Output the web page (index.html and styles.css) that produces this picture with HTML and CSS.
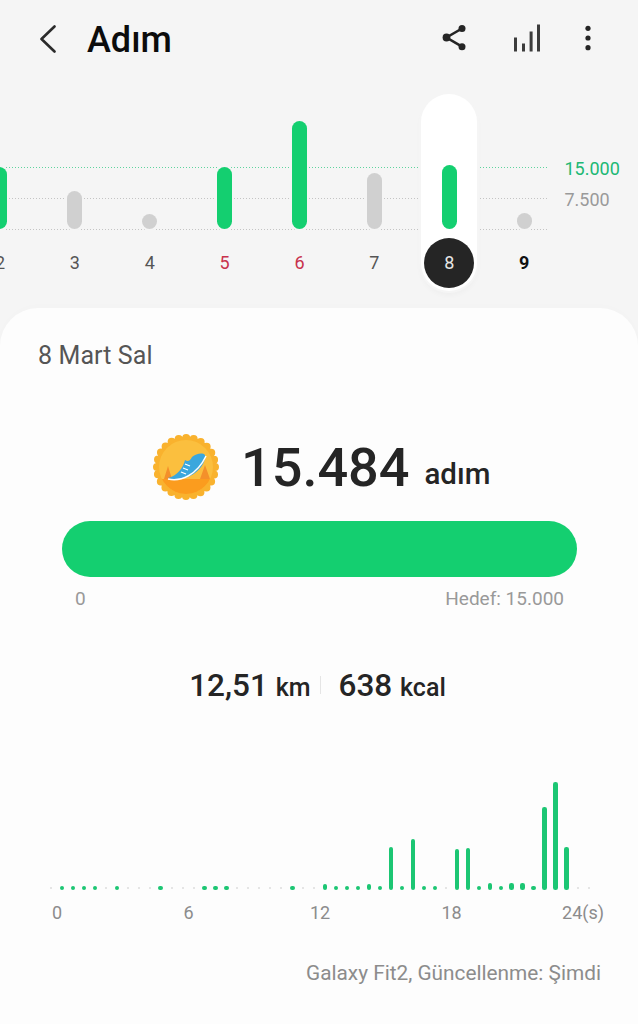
FILE: index.html
```html
<!DOCTYPE html>
<html lang="tr">
<head>
  <meta charset="utf-8">
  <title>Adım</title>
  <link rel="stylesheet" href="styles.css">
</head>
<body>

  <div class="topbar">
    <svg class="back" width="18" height="28" viewBox="0 0 18 28"><path d="M15.5 1.5 L2.5 14 L15.5 26.5" /></svg>
    <h1>Adım</h1>
    <div class="actions">
      <svg class="share" width="24" height="26" viewBox="0 0 24 26">
        <path d="M20 3.5 L4.5 12.5 L20 21.7" />
        <circle cx="20" cy="3.5" r="3.5" />
        <circle cx="4.5" cy="12.5" r="3.9" />
        <circle cx="20" cy="21.7" r="3.5" />
      </svg>
      <svg class="levels" width="26" height="28" viewBox="0 0 26 28">
        <rect x="0" y="13.5" width="3" height="14" />
        <rect x="8" y="19.5" width="3" height="8" />
        <rect x="15.6" y="7.5" width="3" height="20" />
        <rect x="23" y="0.5" width="3" height="27" />
      </svg>
      <svg class="more" width="6" height="26" viewBox="0 0 6 26">
        <circle cx="3" cy="3.3" r="2.6" />
        <circle cx="3" cy="13" r="2.6" />
        <circle cx="3" cy="22.7" r="2.6" />
      </svg>
    </div>
  </div>

  <div class="week">
    <div class="level level-goal"><i></i><span>15.000</span></div>
    <div class="level level-half"><i></i><span>7.500</span></div>
    <div class="level level-zero"><i></i></div>

    <div class="days">
      <div class="day"><div class="slot"><b class="bar green" style="height:62px"></b></div><span class="num">2</span></div>
      <div class="day"><div class="slot"><b class="bar gray" style="height:38px"></b></div><span class="num">3</span></div>
      <div class="day"><div class="slot"><b class="bar gray" style="height:15px"></b></div><span class="num">4</span></div>
      <div class="day"><div class="slot"><b class="bar green" style="height:62px"></b></div><span class="num red">5</span></div>
      <div class="day"><div class="slot"><b class="bar green" style="height:108px"></b></div><span class="num red">6</span></div>
      <div class="day"><div class="slot"><b class="bar gray" style="height:56px"></b></div><span class="num">7</span></div>
      <div class="day selected"><div class="slot"><b class="bar green" style="height:64px"></b></div><span class="num">8</span></div>
      <div class="day"><div class="slot"><b class="bar gray" style="height:16px"></b></div><span class="num today">9</span></div>
    </div>
  </div>

  <div class="card">
    <p class="date">8 Mart Sal</p>

    <div class="total">
      <svg class="badge" width="68" height="68" viewBox="0 0 68 68">
        <defs>
          <clipPath id="badgeClip"><circle cx="34" cy="34" r="27" /></clipPath>
        </defs>
        <circle cx="34" cy="34" r="29" fill="#f9b22e" />
        <circle cx="34" cy="34" r="29" fill="none" stroke="#f9b22e" stroke-width="8" stroke-linecap="round" stroke-dasharray="0 7.59" />
        <g clip-path="url(#badgeClip)">
          <rect x="0" y="0" width="68" height="68" fill="#fbbf3e" />
          <path d="M12 46 L16 33 L20 46 Z M48 46 L53 32 L58 46 Z" fill="#f4902a" />
          <rect x="0" y="46" width="68" height="22" fill="#fb9c1e" />
        </g>
        <path d="M16 45 C25 43 31 35 33 27 C36 29 38 28 40 24 C44 21 50 19 53 22 C54 29 47 39 38 43 C30 47 20 47 16 45 Z" fill="#3ba7dd" />
        <path d="M16 46 C29 49 45 42 54 23" fill="none" stroke="#fff" stroke-width="1.5" />
        <path d="M33 31 L38 33 M31 35 L36 37 M29 39 L34 41" stroke="#fff" stroke-width="1.3" />
      </svg>
      <span class="steps">15.484</span>
      <span class="steps-unit">adım</span>
    </div>

    <div class="progress"></div>
    <div class="progress-labels">
      <span>0</span>
      <span>Hedef: 15.000</span>
    </div>

    <div class="stats">
      <span class="stat">12,51 <small>km</small></span>
      <i class="sep"></i>
      <span class="stat">638 <small>kcal</small></span>
    </div>

    <div class="hours">
      <b class="tick"></b><b class="dot"></b><b class="dot"></b><b class="dot"></b><b class="dot"></b><b class="tick"></b><b class="dot"></b><b class="tick"></b><b class="tick"></b><b class="tick"></b>
      <b class="dot"></b><b class="tick"></b><b class="tick"></b><b class="tick"></b><b class="dot"></b><b class="dot"></b><b class="dot"></b><b class="tick"></b><b class="tick"></b><b class="tick"></b>
      <b class="tick"></b><b class="tick"></b><b class="dot"></b><b class="tick"></b><b class="tick"></b><b class="dot" style="height:6px"></b><b class="dot"></b><b class="dot"></b><b class="dot"></b><b class="dot" style="height:6px"></b>
      <b class="dot"></b><b class="dot" style="height:43px"></b><b class="dot"></b><b class="dot" style="height:51px"></b><b class="dot"></b><b class="dot"></b><b class="tick"></b><b class="dot" style="height:41px"></b><b class="dot" style="height:42px"></b><b class="dot"></b>
      <b class="dot" style="height:7px"></b><b class="dot"></b><b class="dot" style="height:7px"></b><b class="dot" style="height:7px"></b><b class="dot"></b><b class="dot" style="height:83px"></b><b class="dot" style="height:108px"></b><b class="dot" style="height:43px"></b><b class="tick"></b><b class="tick"></b>
    </div>
    <div class="hour-labels">
      <span>0</span><span>6</span><span>12</span><span>18</span><span>24(s)</span>
    </div>

    <p class="source">Galaxy Fit2, Güncellenme: Şimdi</p>
  </div>

</body>
</html>
```
FILE: styles.css
```css
body {
  margin: 0;
  width: 638px;
  height: 1024px;
  overflow: hidden;
  display: flex;
  flex-direction: column;
  background-color: #f5f5f5;
  font-family: Roboto, "Liberation Sans", sans-serif;
  color: #252525;
}

.topbar {
  height: 94px;
  flex: none;
  display: flex;
  align-items: flex-start;
  padding-left: 39px;
  padding-right: 47px;
  box-sizing: border-box;
}

.back {
  margin-top: 25px;
  fill: none;
  stroke: #2b2b2b;
  stroke-width: 2.6;
  stroke-linecap: round;
  stroke-linejoin: round;
}

h1 {
  margin: 18px 0 0 30px;
  font-size: 36px;
  line-height: 44px;
  font-weight: 500;
  color: #0c0c0c;
}

.actions {
  margin-left: auto;
  margin-top: 24px;
  display: flex;
  align-items: flex-start;
}

.share {
  margin-top: 1px;
  fill: #252525;
  stroke: #252525;
}

.share path {
  fill: none;
  stroke-width: 2.6;
}

.share circle {
  stroke: none;
}

.levels {
  margin-left: 48px;
  fill: #3c3c3c;
}

.more {
  margin-left: 45px;
  margin-top: 1px;
  fill: #252525;
}

/* week chart */
.week {
  position: relative;
  height: 214px;
  flex: none;
}

.level {
  position: absolute;
  left: 0;
  right: 0;
  height: 1px;
  display: flex;
  align-items: center;
  font-size: 18px;
}

.level i {
  width: 547px;
  height: 1px;
  flex: none;
  background: repeating-linear-gradient(90deg, #c4c4c4 0 1px, transparent 1px 3px);
}

.level span {
  position: relative;
  top: 1px;
  margin-left: 17.5px;
}

.level-goal {
  top: 73px;
  color: #20b874;
}

.level-goal i {
  background: repeating-linear-gradient(90deg, #5fd49d 0 1px, transparent 1px 3px);
}

.level-half {
  top: 104px;
  color: #9a9a9a;
}

.level-zero {
  top: 135px;
}

.days {
  position: relative;
  display: flex;
  margin-left: -37.5px;
}

.day {
  width: 74.9px;
  flex: none;
  display: flex;
  flex-direction: column;
  align-items: center;
  height: 197px;
  box-sizing: border-box;
}

.selected {
  position: relative;
}

.selected::before {
  content: "";
  position: absolute;
  top: 0;
  bottom: 0;
  left: 9.5px;
  width: 56px;
  border-radius: 28px;
  background-color: #fff;
  box-shadow: 0 0 0 2px #f5f5f5, 0 4px 6px rgba(0, 0, 0, 0.03);
}

.slot {
  position: relative;
  height: 135px;
  display: flex;
  align-items: flex-end;
}

.bar {
  display: block;
  width: 15px;
  border-radius: 8px;
  box-shadow: 0 0 0 2px #f5f5f5;
}

.selected .bar {
  box-shadow: none;
}

.green {
  background-color: #14cf70;
}

.gray {
  background-color: #d0d0d0;
}

.num {
  position: relative;
  margin-top: 9px;
  width: 50px;
  height: 50px;
  line-height: 50px;
  border-radius: 50%;
  text-align: center;
  font-size: 18px;
  color: #555;
}

.selected .num {
  background-color: #252525;
  color: #e6e6e6;
}

.red {
  color: #c8324c;
}

.today {
  color: #111;
  font-weight: 700;
}

/* card */
.card {
  flex: 1;
  background-color: #fdfdfd;
  border-radius: 38px 38px 0 0;
  padding: 33px 0 0;
  box-shadow: 0 -2px 8px rgba(0, 0, 0, 0.01);
}

.date {
  margin: 0 0 0 38px;
  font-size: 25px;
  line-height: 30px;
  letter-spacing: 0.1px;
  color: #555;
}

.total {
  margin-top: 62px;
  margin-left: 153px;
  display: flex;
  align-items: center;
  height: 68px;
}

.badge {
  flex: none;
  margin-left: -1px;
}

.steps {
  margin-left: 21px;
  font-size: 54px;
  font-weight: 500;
  color: #252525;
}

.steps-unit {
  margin-left: 15px;
  margin-top: 14px;
  font-size: 29.5px;
  font-weight: 500;
}

.progress {
  margin: 20px 61px 0 62px;
  height: 56px;
  border-radius: 28px;
  background-color: #14cf70;
}

.progress-labels {
  margin: 11px 74px 0 75px;
  display: flex;
  justify-content: space-between;
  font-size: 19px;
  line-height: 22px;
  color: #999;
}

.stats {
  margin-top: 55px;
  padding-right: 3px;
  display: flex;
  justify-content: center;
  align-items: center;
  height: 40px;
}

.stat {
  font-size: 31.5px;
  font-weight: 500;
  color: #252525;
}

.stat small {
  font-size: 25px;
}

.sep {
  width: 1px;
  height: 18px;
  margin: 0 18px 0 9px;
  background-color: #e5e5e5;
}

/* hourly chart */
.hours {
  margin: 77px 0 0 45.5px;
  width: 548.5px;
  height: 108px;
  display: grid;
  grid-template-columns: repeat(50, 1fr);
  align-items: end;
  justify-items: center;
}

.dot {
  display: block;
  width: 4.5px;
  height: 4.5px;
  border-radius: 2.25px;
  background-color: #1cc673;
}

.tick {
  display: block;
  width: 2px;
  height: 2px;
  margin-bottom: 1px;
  border-radius: 1px;
  background-color: #dcdcdc;
}

.hour-labels {
  margin: 12px 55px 0 57px;
  height: 22px;
  display: flex;
  justify-content: space-between;
  font-size: 18px;
  line-height: 22px;
  color: #8c8c8c;
}

.hour-labels span {
  width: 0;
  display: flex;
  justify-content: center;
  white-space: nowrap;
}

.source {
  margin: 37px 37px 0 0;
  text-align: right;
  font-size: 20.8px;
  line-height: 24px;
  color: #8c8c8c;
}
```
